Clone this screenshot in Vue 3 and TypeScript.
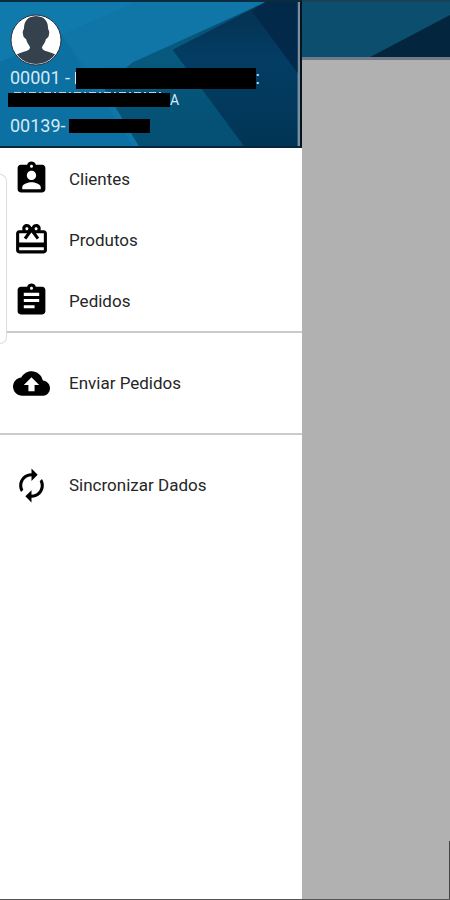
<script setup lang="ts">
interface MenuItem {
  label: string
  icon: string
}

const clipboardUser =
  'M19 3h-4.180C14.400 1.840 13.300 1 12 1c-1.300 0-2.400.840-2.820 2H5c-1.100 0-2 .9-2 2v14c0 1.100.9 2 2 2h14c1.100 0 2-.9 2-2V5c0-1.100-.9-2-2-2zm-7 0c.55 0 1 .45 1 1s-.45 1-1 1-1-.45-1-1 .45-1 1-1zm0 4c1.660 0 3 1.340 3 3s-1.340 3-3 3-3-1.340-3-3 1.340-3 3-3zm6 12H6v-1.400c0-2 4-3.100 6-3.100s6 1.100 6 3.100V19z'
const gift =
  'M20 6h-2.180c.11-.31.18-.65.18-1 0-1.660-1.340-3-3-3-1.050 0-1.960.54-2.500 1.350l-.5.670-.5-.680C10.960 2.540 10.050 2 9 2 7.340 2 6 3.340 6 5c0 .35.07.69.18 1H4c-1.110 0-1.990.89-1.990 2L2 19c0 1.110.89 2 2 2h16c1.110 0 2-.89 2-2V8c0-1.110-.89-2-2-2zm-5-2c.55 0 1 .45 1 1s-.45 1-1 1-1-.45-1-1 .45-1 1-1zM9 4c.55 0 1 .45 1 1s-.45 1-1 1-1-.45-1-1 .45-1 1-1zm11 15H4v-2h16v2zm0-5H4V8h5.080L7 10.830 8.620 12 11 8.760l1-1.360 1 1.360L15.380 12 17 10.830 14.920 8H20v6z'
const clipboardText =
  'M19 3h-4.180C14.400 1.840 13.300 1 12 1c-1.300 0-2.400.840-2.820 2H5c-1.100 0-2 .9-2 2v14c0 1.100.9 2 2 2h14c1.100 0 2-.9 2-2V5c0-1.100-.9-2-2-2zm-7 0c.55 0 1 .45 1 1s-.45 1-1 1-1-.45-1-1 .45-1 1-1zm2 14H7v-2h7v2zm3-4H7v-2h10v2zm0-4H7V7h10v2z'
const cloudUpload =
  'M19.350 10.040C18.670 6.590 15.640 4 12 4 9.110 4 6.600 5.640 5.350 8.040 2.340 8.360 0 10.910 0 14c0 3.310 2.690 6 6 6h13c2.760 0 5-2.240 5-5 0-2.640-2.050-4.780-4.650-4.960zM14 13v4h-4v-4H7l5-5 5 5h-3z'
const sync =
  'M12 6v3l4-4-4-4v3c-4.420 0-8 3.580-8 8 0 1.570.46 3.030 1.240 4.260L6.700 14.800c-.45-.83-.7-1.790-.7-2.800 0-3.310 2.690-6 6-6zm6.760 1.740L17.300 9.200c.44.84.7 1.790.7 2.800 0 3.310-2.690 6-6 6v-3l-4 4 4 4v-3c4.420 0 8-3.580 8-8 0-1.570-.46-3.030-1.240-4.260z'

const groups: { name: string; items: MenuItem[] }[] = [
  {
    name: 'records',
    items: [
      { label: 'Clientes', icon: clipboardUser },
      { label: 'Produtos', icon: gift },
      { label: 'Pedidos', icon: clipboardText },
    ],
  },
  { name: 'send', items: [{ label: 'Enviar Pedidos', icon: cloudUpload }] },
  { name: 'sync', items: [{ label: 'Sincronizar Dados', icon: sync }] },
]
</script>

<template>
  <div class="screen">
    <aside class="drawer">
      <header class="profile">
        <svg class="backdrop" viewBox="0 0 300 148" preserveAspectRatio="none" aria-hidden="true">
          <defs>
            <linearGradient id="light" x1="0" y1="0" x2="1" y2="0.4">
              <stop offset="0" stop-color="#0b71a1" />
              <stop offset="1" stop-color="#1178ab" />
            </linearGradient>
            <linearGradient id="mid" x1="0" y1="0" x2="0" y2="1">
              <stop offset="0" stop-color="#06496b" />
              <stop offset="0.3" stop-color="#075a7f" />
              <stop offset="1" stop-color="#044f73" />
            </linearGradient>
            <linearGradient id="deep" x1="0" y1="0" x2="0" y2="1">
              <stop offset="0" stop-color="#04304f" />
              <stop offset="0.4" stop-color="#033d64" />
              <stop offset="1" stop-color="#013555" />
            </linearGradient>
          </defs>
          <rect width="300" height="148" fill="url(#light)" />
          <path d="M0 62L62 34 134 2V0H0z" fill="#117aad" />
          <path d="M62 34L134 148H0V62z" fill="#0c70a3" />
          <path d="M62 34L87 68 134 65 264 2V0H138z" fill="#1076a7" />
          <path d="M268 0L134 62l-30 25 36 61h160V0z" fill="url(#mid)" />
          <path d="M174 49l94-49h32v148h-54z" fill="url(#deep)" />
          <path d="M254 9l14-9h32v73z" fill="#03294a" />
        </svg>
        <svg class="avatar" viewBox="0 0 52 52" role="img" aria-label="Avatar">
          <defs>
            <clipPath id="face"><circle cx="26" cy="26" r="24" /></clipPath>
          </defs>
          <circle cx="26" cy="26" r="25" fill="#fff" stroke="#26333d" stroke-width="1" />
          <path
            clip-path="url(#face)"
            fill="#35424d"
            d="M26 2c-8 0-12 5-12 12 0 2-2 3-1 6 0 2 1 4 3 5 1 4 3 6 4 8 0 3-3 4-7 5-6 2-10 4-11 8v6h48v-6c-1-4-5-6-11-8-4-1-7-2-7-5 1-2 3-4 4-8 2-1 3-3 3-5 1-3-1-4-1-6 0-7-4-12-12-12z"
          />
        </svg>
        <div class="account">
          <div class="line"><span>00001 - </span><i class="peek" /><i class="mask wide" /><span>:</span></div>
          <div class="line second"><i class="mask name" /><span class="tail">A</span></div>
          <div class="line third"><span>00139-</span><i class="mask short" /></div>
        </div>
      </header>
      <nav class="menu">
        <ul v-for="group in groups" :key="group.name" :class="['group', { single: group.items.length === 1 }]">
          <li v-for="item in group.items" :key="item.label">
            <a class="item" href="#">
              <svg class="icon" viewBox="0 0 24 24" aria-hidden="true"><path :d="item.icon" /></svg>
              <span>{{ item.label }}</span>
            </a>
          </li>
        </ul>
      </nav>
      <span class="handle" />
    </aside>
    <main class="page">
      <div class="toolbar">
        <svg viewBox="0 0 148 56" preserveAspectRatio="none" aria-hidden="true">
          <rect width="148" height="56" fill="#0b4e6e" />
          <path d="M68 56L148 13v43z" fill="#03253e" />
        </svg>
      </div>
      <span class="edge" />
    </main>
  </div>
</template>

<style>
body {
  background: #b1b1b1;
}
</style>

<style scoped>
.screen {
  position: relative;
  display: flex;
  min-height: 100vh;
  box-sizing: border-box;
  border-bottom: 1px solid #555;
  font-family: Roboto, "Liberation Sans", sans-serif;
}

.drawer {
  position: relative;
  flex: 67;
  min-width: 0;
  background: #fff;
}

.profile {
  position: relative;
  display: flex;
  flex-direction: column;
  height: 148px;
  box-sizing: border-box;
  padding: 12px 0 0 10px;
  border-top: 2px solid #0b2c40;
  border-bottom: 2px solid #08253a;
  border-right: 2px solid #071420;
  color: #d5e9f3;
}

.backdrop {
  position: absolute;
  inset: 0;
  width: 100%;
  height: 100%;
  box-sizing: border-box;
  border-right: 2px solid #7d8f9f;
}

.avatar {
  position: relative;
  flex: none;
  width: 52px;
  height: 52px;
}

.account {
  position: relative;
  font-size: 18px;
  line-height: 24px;
}

.line {
  display: flex;
  align-items: center;
  height: 24px;
  white-space: pre;
}

.mask {
  display: block;
  height: 14px;
  background: #000;
}

.peek {
  width: 1px;
  height: 12px;
  background: #d5e9f3;
}

.wide {
  width: 180px;
  height: 21px;
}

.line.second {
  height: 20px;
  margin-left: -2px;
}

.name {
  position: relative;
  width: 162px;
}

.name::before {
  content: "";
  position: absolute;
  top: -1px;
  left: 6px;
  right: 6px;
  height: 1px;
  background: repeating-linear-gradient(90deg, #b5d3e2 0 7px, transparent 7px 10px, #b5d3e2 10px 12px, transparent 12px 15px);
}

.tail {
  font-size: 14px;
}

.third {
  margin-top: 4px;
}

.short {
  width: 81px;
  margin-left: 3px;
}

.group {
  margin: 0;
  padding: 0;
  list-style: none;
}

.group + .group {
  border-top: 2px solid #cbcbcb;
}

.item {
  display: flex;
  align-items: center;
  gap: 19px;
  height: 61px;
  padding-left: 13px;
  color: #262626;
  font-size: 17px;
  text-decoration: none;
}

.single .item {
  height: 100px;
}

.icon {
  width: 37px;
  height: 37px;
  fill: #000;
}

.handle {
  position: absolute;
  top: 174px;
  left: 0;
  width: 6px;
  height: 168px;
  border: 1px solid #ddd;
  border-left: 0;
  border-radius: 0 7px 7px 0;
  background: #fff;
}

.page {
  position: relative;
  flex: 33;
  min-width: 0;
  background: #b1b1b1;
}

.toolbar {
  height: 60px;
  box-sizing: border-box;
  border-top: 2px solid #174458;
  border-bottom: 3px solid #747b86;
}

.toolbar svg {
  display: block;
  width: 100%;
  height: 100%;
}

.edge {
  position: absolute;
  right: 0;
  bottom: 0;
  width: 1px;
  height: 58px;
  background: #444;
}
</style>
